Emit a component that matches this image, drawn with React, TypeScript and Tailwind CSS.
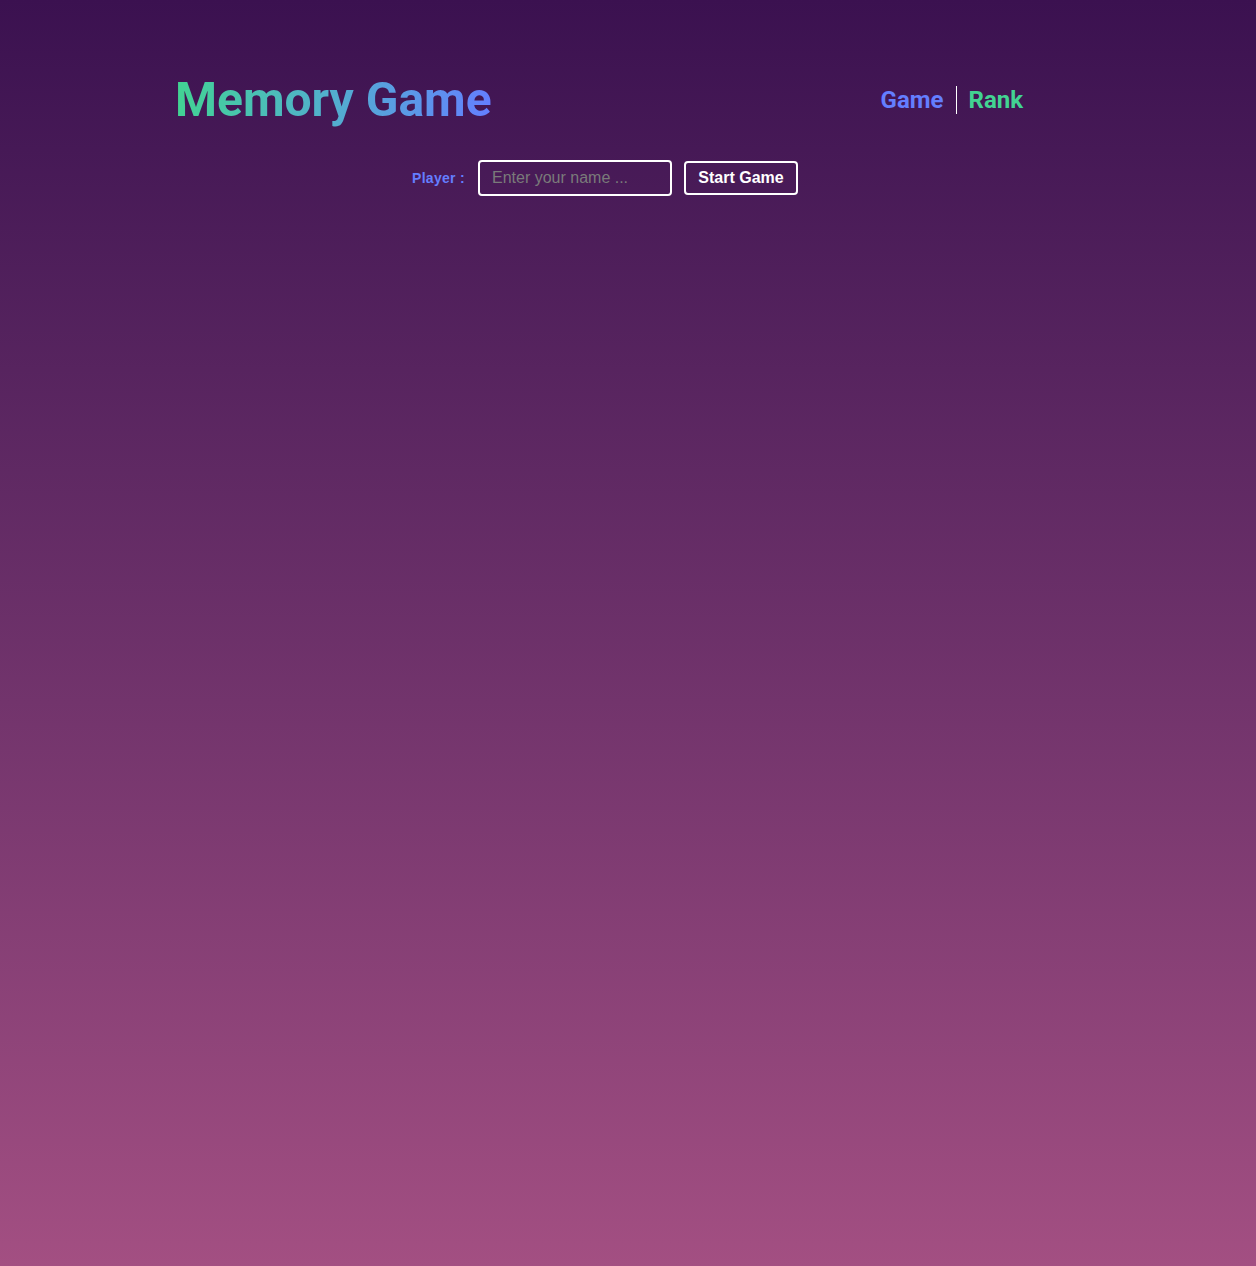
import React from "react";

export default function App() {
  return (
    <div className="min-h-[1266px] w-full bg-gradient-to-b from-[#3b1150] to-[#a34f82] font-['Roboto',sans-serif]">
      <header className="ml-[175px] w-[848px] pt-[70px] flex items-center justify-between">
        <h1 className="text-[48px] leading-[60px] font-bold bg-gradient-to-r from-[#42d392] to-[#647eff] bg-clip-text text-transparent">
          Memory Game
        </h1>
        <nav className="flex items-center text-[24px] font-bold leading-[28px]">
          <a className="text-[#647eff] pr-[12px]">Game</a>
          <span className="w-px h-[28px] bg-white" />
          <a className="text-[#42d392] pl-[12px]">Rank</a>
        </nav>
      </header>
      <div className="ml-[412px] mt-[30px] flex items-center gap-[12px] font-['Liberation_Sans',Arial,sans-serif]">
        <label className="w-[54px] text-[14px] font-bold text-[#647eff] tracking-[0.3px]">Player :</label>
        <input
          className="w-[194px] h-[36px] border-2 border-white rounded-[4px] bg-transparent px-[12px] text-[16px] text-white placeholder:text-[#7a7a7a] outline-none"
          placeholder="Enter your name ..."
        />
        <button className="w-[114px] h-[34px] flex items-center justify-center border-2 border-white rounded-[4px] text-white font-bold text-[16px]">
          Start Game
        </button>
      </div>
    </div>
  );
}
